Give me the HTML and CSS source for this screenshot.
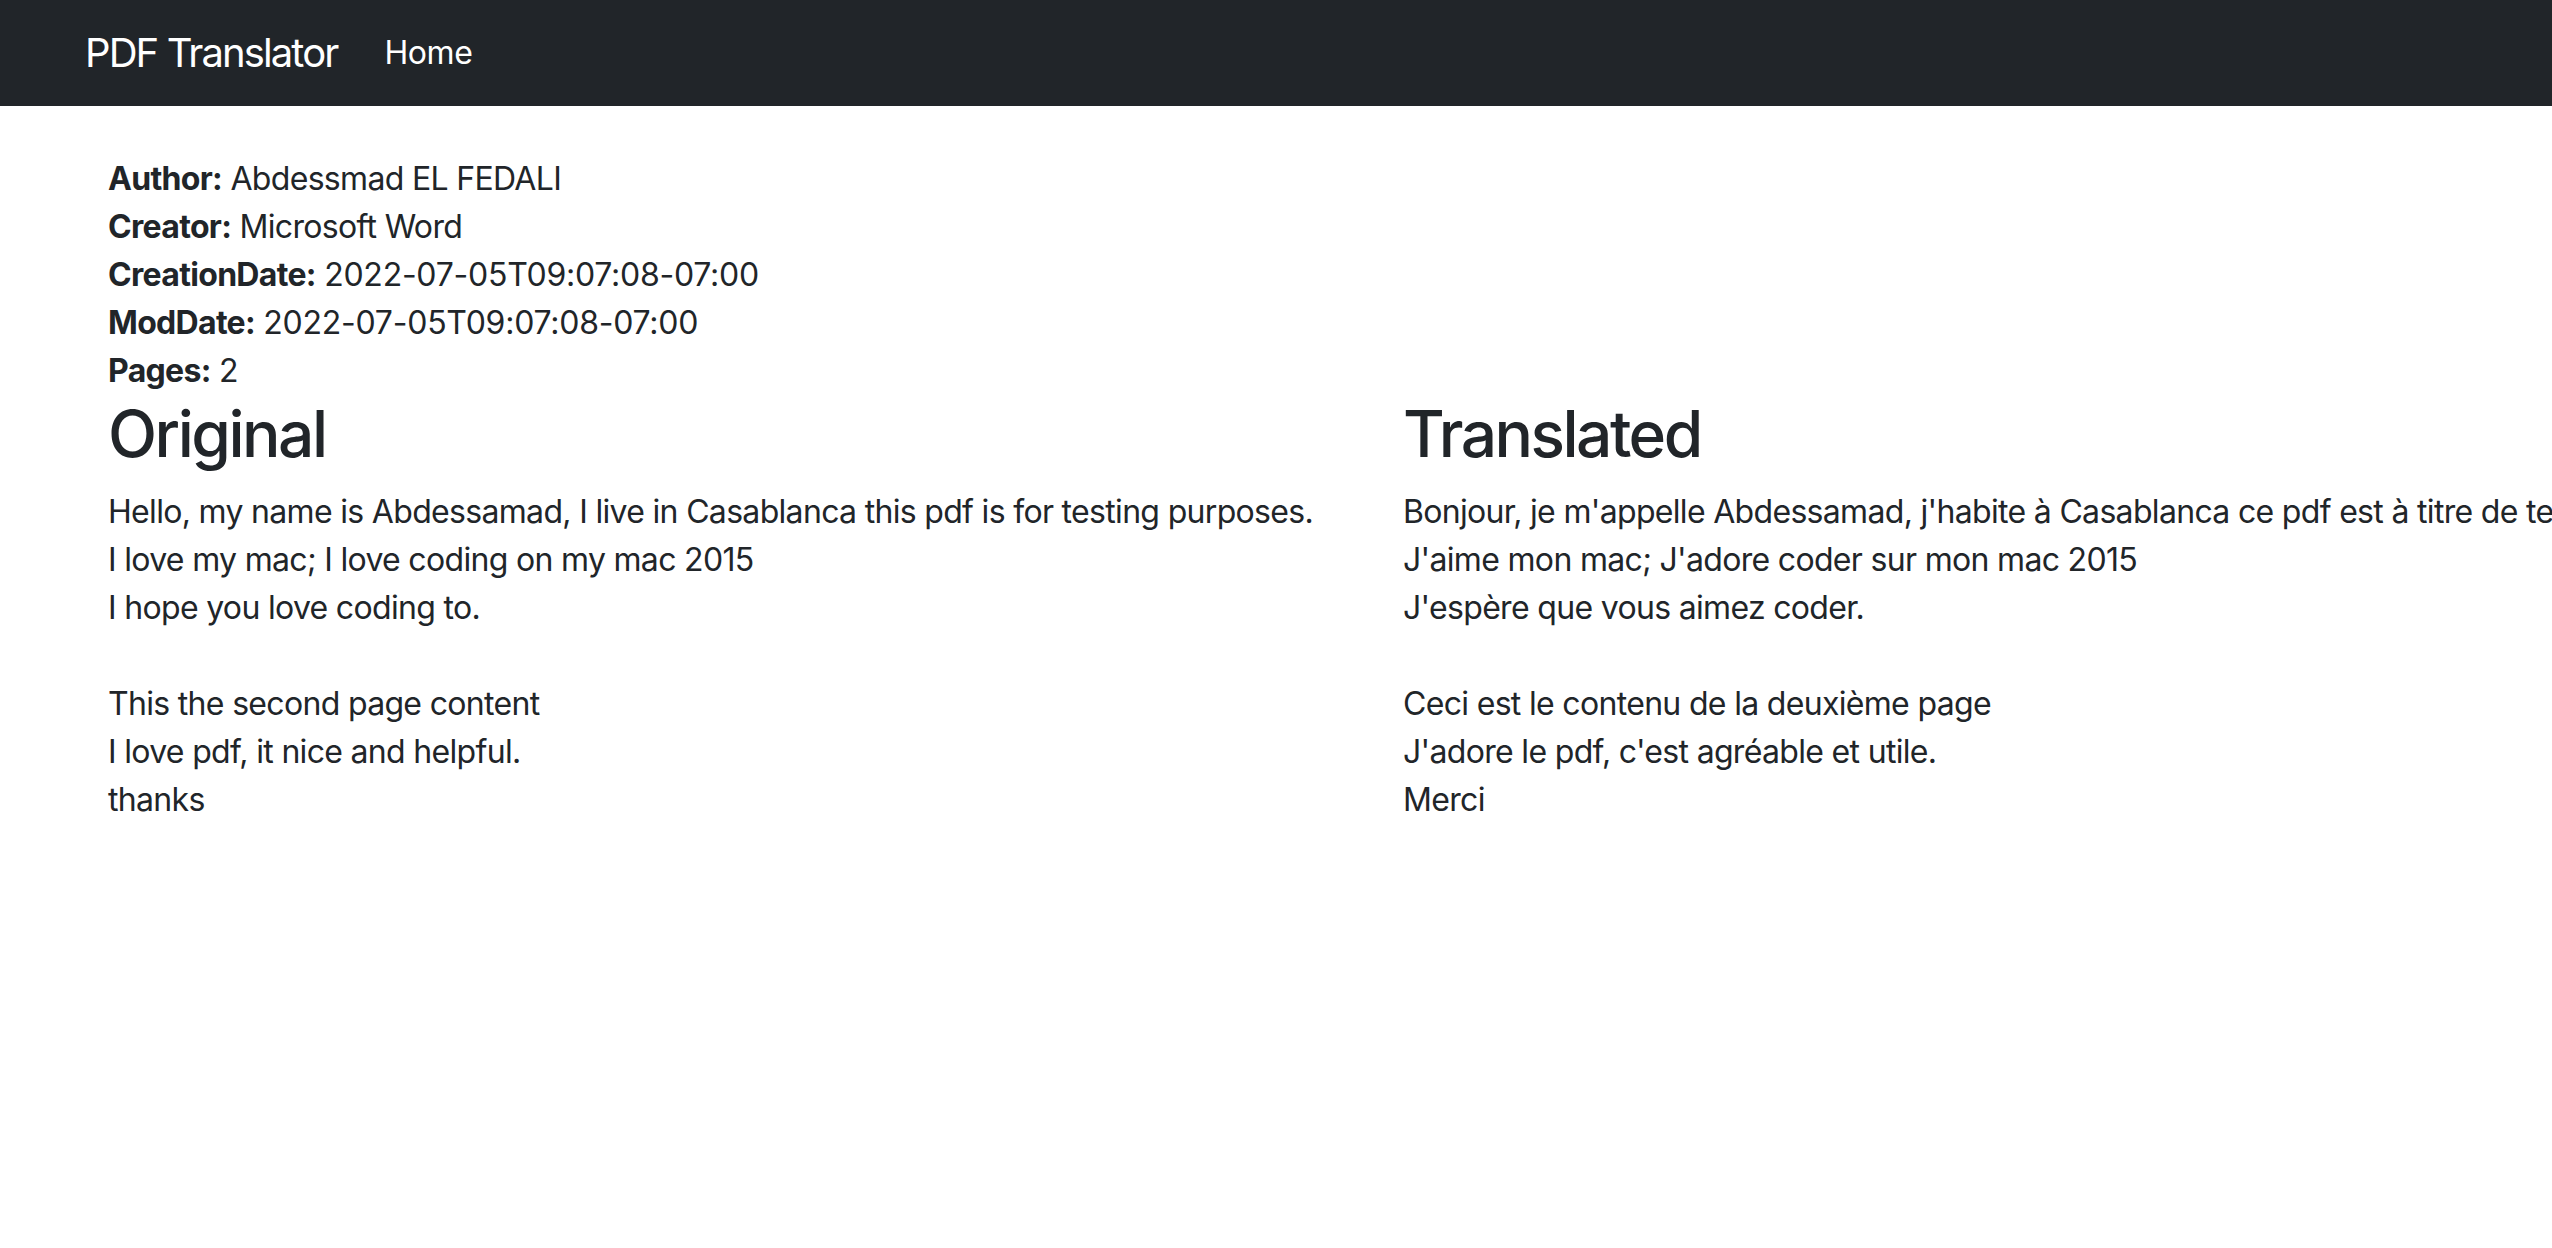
FILE: index.html
```html
<!DOCTYPE html>
<html lang="en">
<head>
<meta charset="utf-8">
<title>PDF Translator</title>
<link rel="stylesheet" href="styles.css">
</head>
<body>
<nav class="navbar">
  <a class="brand" href="#">PDF Translator</a>
  <a class="nav-link" href="#">Home</a>
</nav>
<main class="container">
  <div class="meta">
    <div><b>Author:</b> Abdessmad EL FEDALI</div>
    <div><b>Creator:</b> Microsoft Word</div>
    <div><b>CreationDate:</b> <span class="num">2022-07-05T09:07:08-07:00</span></div>
    <div><b>ModDate:</b> <span class="num">2022-07-05T09:07:08-07:00</span></div>
    <div><b>Pages:</b> 2</div>
  </div>
  <div class="row">
    <section class="col">
      <h2>Original</h2>
      <div class="text">Hello, my name is Abdessamad, I live in Casablanca this pdf is for testing purposes.
I love my mac; I love coding on my mac 2015
I hope you love coding to.

This the second page content
I love pdf, it nice and helpful.
thanks</div>
    </section>
    <section class="col">
      <h2>Translated</h2>
      <div class="text">Bonjour, je m'appelle Abdessamad, j'habite à Casablanca ce pdf est à titre de test.
J'aime mon mac; J'adore coder sur mon mac 2015
J'espère que vous aimez coder.

Ceci est le contenu de la deuxième page
J'adore le pdf, c'est agréable et utile.
Merci</div>
    </section>
  </div>
</main>
</body>
</html>
```
FILE: styles.css
```css
html, body {
  margin: 0;
  padding: 0;
  overflow: hidden;
  background: #fff;
}
body {
  font-family: Inter, "Noto Sans", sans-serif;
  font-size: 32px;
  line-height: 48px;
  letter-spacing: -0.68px;
  color: #212529;
}
.navbar {
  height: 106px;
  background: #212529;
  display: flex;
  align-items: center;
  padding: 0 0 0 85px;
  box-sizing: border-box;
}
.brand {
  font-size: 40px;
  line-height: 60px;
  letter-spacing: -1.9px;
  color: #fff;
  text-decoration: none;
  margin-right: 47px;
}
.nav-link {
  font-size: 32px;
  letter-spacing: -0.4px;
  color: #fff;
  text-decoration: none;
}
.container {
  padding: 49px 0 0 108px;
}
.meta b {
  font-weight: 700;
}
.meta .num {
  letter-spacing: -0.25px;
}
.row {
  display: flex;
  gap: 90px;
}
.col {
  flex: none;
}
h2 {
  margin: 0 0 16px;
  font-size: 64px;
  line-height: 77px;
  font-weight: 500;
  letter-spacing: -2.5px;
}
.text {
  white-space: pre;
}
```
